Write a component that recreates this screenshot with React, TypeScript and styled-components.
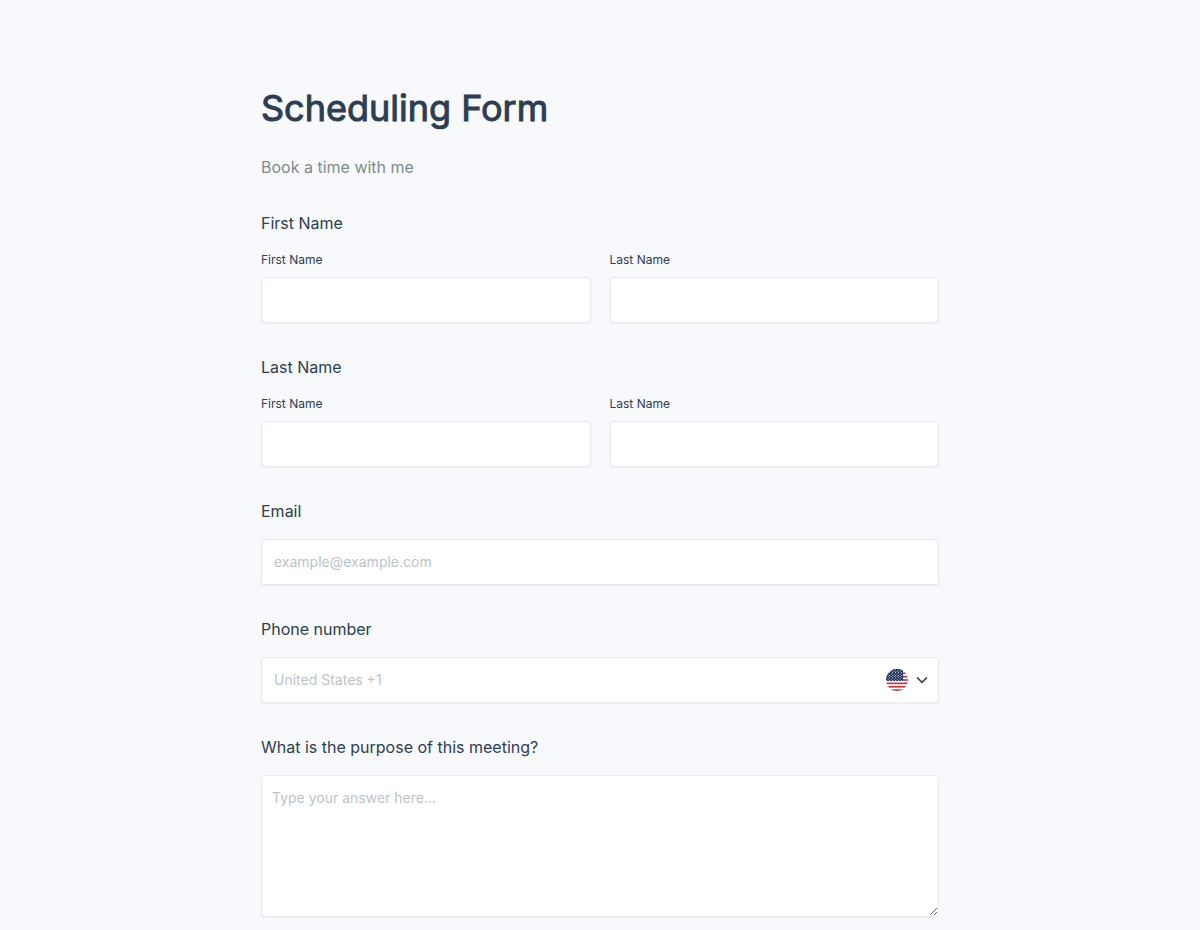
import React, { useId, useState } from "react";
import styled, { createGlobalStyle, css } from "styled-components";

const GlobalStyle = createGlobalStyle`
  *, *::before, *::after { box-sizing: border-box; }
  body {
    margin: 0;
    background: #f8f9fd;
    color: #2c3e50;
    font-family: Inter, "Liberation Sans", sans-serif;
    font-size: 16px;
    line-height: 24px;
  }
`;

const Page = styled.main`
  max-width: 718px;
  margin: 0 auto;
  padding: 85px 20px 12px;
`;

const Title = styled.h1`
  margin: 0 0 24px;
  font-size: 36px;
  line-height: 46px;
  font-weight: 400;
  -webkit-text-stroke: 1px currentColor;
`;

const Subtitle = styled.p`
  margin: 0 0 32px;
  color: #7f8c8d;
`;

const Form = styled.form`
  display: flex;
  flex-direction: column;
  gap: 32px;
`;

const Field = styled.div`
  display: flex;
  flex-direction: column;
  gap: 16px;
`;

const Question = styled.label`
  display: block;
`;

const Columns = styled.div`
  display: grid;
  grid-template-columns: 1fr 1fr;
  gap: 19px;
`;

const Column = styled.div`
  display: flex;
  flex-direction: column;
  gap: 8px;
  min-width: 0;
`;

const SubLabel = styled.label`
  font-size: 12px;
  line-height: 18px;
`;

const box = css`
  width: 100%;
  border: 1px solid #e9ebed;
  border-radius: 4px;
  background: #fff;
  box-shadow: 0 1px 2px rgba(0, 0, 0, 0.06);
`;

const text = css`
  color: inherit;
  font-family: inherit;
  font-size: 14px;
  line-height: 20px;
  outline: none;
  &::placeholder { color: #bdc3c7; opacity: 1; }
`;

const Input = styled.input`
  ${box}
  ${text}
  height: 46px;
  padding: 0 12px 2px;
  &:focus { border-color: #2c3e50; }
`;

const PhoneBox = styled.div`
  ${box}
  display: flex;
  align-items: center;
  height: 46px;
  padding: 0 10px 0 12px;
  &:focus-within { border-color: #2c3e50; }
`;

const PhoneInput = styled.input`
  ${text}
  flex: 1;
  min-width: 0;
  height: 100%;
  padding: 0 0 2px;
  border: 0;
  background: none;
`;

const CountryButton = styled.button`
  display: flex;
  align-items: center;
  gap: 8px;
  padding: 0;
  border: 0;
  background: none;
  color: inherit;
  cursor: pointer;
`;

const TextArea = styled.textarea`
  ${box}
  ${text}
  display: block;
  height: 142px;
  padding: 12px 10px;
  resize: vertical;
  &:focus { border-color: #2c3e50; }
`;

const STRIPES = [0, 2, 4, 6, 8, 10, 12];
const STARS = Array.from({ length: 9 }, (_, row) =>
  Array.from({ length: 6 }, (_, col) => ({
    x: 0.6 + col * 3 + (row % 2) * 1.5,
    y: 1 + row * 1.3,
  }))
).flat().filter(({ x }) => x < 16.5);

function UsFlag() {
  const clip = useId();
  return (
    <svg width="22" height="22" viewBox="0 0 22 22" aria-hidden="true">
      <clipPath id={clip}>
        <circle cx="11" cy="11" r="11" />
      </clipPath>
      <g clipPath={`url(#${clip})`}>
        <rect width="22" height="22" fill="#fff" />
        {STRIPES.map((i) => (
          <rect key={i} y={(i * 22) / 13} width="22" height={22 / 13} fill="#bd3d44" />
        ))}
        <rect width="17" height="11.85" fill="#192f5d" />
        {STARS.map(({ x, y }) => (
          <circle key={`${x}-${y}`} cx={x} cy={y} r="0.5" fill="#fff" />
        ))}
      </g>
    </svg>
  );
}

function Chevron() {
  return (
    <svg width="12" height="8" viewBox="0 0 12 8" fill="none" aria-hidden="true">
      <path d="M1 1.5 6 6.3 11 1.5" stroke="currentColor" strokeWidth="1.6" />
    </svg>
  );
}

function NameField({ title }: { title: string }) {
  const id = useId();
  return (
    <Field role="group" aria-labelledby={`${id}-title`}>
      <Question as="span" id={`${id}-title`}>{title}</Question>
      <Columns>
        <Column>
          <SubLabel htmlFor={`${id}-first`}>First Name</SubLabel>
          <Input id={`${id}-first`} type="text" />
        </Column>
        <Column>
          <SubLabel htmlFor={`${id}-last`}>Last Name</SubLabel>
          <Input id={`${id}-last`} type="text" />
        </Column>
      </Columns>
    </Field>
  );
}

export default function App() {
  const [phone, setPhone] = useState("");
  return (
    <>
      <GlobalStyle />
      <Page>
        <Title>Scheduling Form</Title>
        <Subtitle>Book a time with me</Subtitle>
        <Form>
          <NameField title="First Name" />
          <NameField title="Last Name" />
          <Field>
            <Question htmlFor="email">Email</Question>
            <Input id="email" type="email" placeholder="example@example.com" />
          </Field>
          <Field>
            <Question htmlFor="phone">Phone number</Question>
            <PhoneBox>
              <PhoneInput
                id="phone"
                type="tel"
                placeholder="United States +1"
                value={phone}
                onChange={(e) => setPhone(e.target.value)}
              />
              <CountryButton type="button" aria-label="Choose country">
                <UsFlag />
                <Chevron />
              </CountryButton>
            </PhoneBox>
          </Field>
          <Field>
            <Question htmlFor="purpose">What is the purpose of this meeting?</Question>
            <TextArea id="purpose" placeholder="Type your answer here..." />
          </Field>
        </Form>
      </Page>
    </>
  );
}
